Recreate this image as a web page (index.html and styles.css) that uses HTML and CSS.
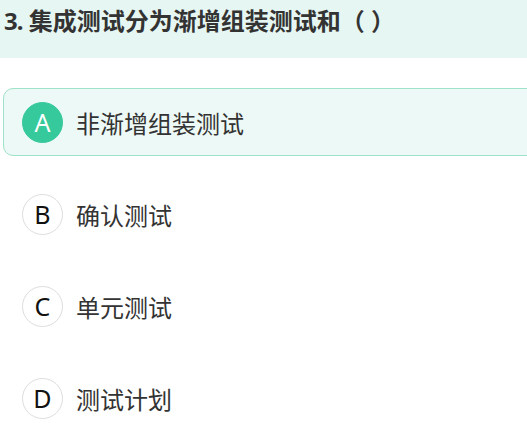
FILE: index.html
```html
<!DOCTYPE html>
<html lang="zh-CN">
<head>
    <meta charset="utf-8">
    <title>单选题</title>
    <link rel="stylesheet" href="styles.css">
</head>
<body>
    <header class="question">
        <h2 class="question-title"><span class="question-no">3.</span> 集成测试分为渐增组装测试和（ ）</h2>
    </header>
    <ul class="options">
        <li class="option selected">
            <span class="option-key">A</span>
            <span class="option-text">非渐增组装测试</span>
        </li>
        <li class="option">
            <span class="option-key">B</span>
            <span class="option-text">确认测试</span>
        </li>
        <li class="option">
            <span class="option-key">C</span>
            <span class="option-text">单元测试</span>
        </li>
        <li class="option">
            <span class="option-key">D</span>
            <span class="option-text">测试计划</span>
        </li>
    </ul>
</body>
</html>
```

FILE: styles.css
```css
* { padding: 0; margin: 0; box-sizing: border-box; }
html { overflow: hidden; }
body {
    font-family: "Noto Sans", "Noto Sans CJK SC", sans-serif;
    color: #333;
    background-color: #fff;
}
.question {
    background-color: #e6f6f2;
    padding: 3px 4px 19px;
}
.question-title {
    font-size: 24px;
    line-height: 36px;
    font-weight: bold;
    color: #333;
}
.question-no { letter-spacing: -1px; }
.options {
    list-style: none;
    margin-top: 30px;
}
.option {
    display: flex;
    align-items: center;
    height: 68px;
    margin: 0 -20px 24px 3px; /* runs past the right edge */
    padding-left: 18px;
    border: 1px solid transparent;
    border-radius: 10px;
}
.option.selected {
    background-color: #edf9f6;
    border-color: #9fe2c9;
}
.option-key {
    width: 41px;
    height: 41px;
    border-radius: 50%;
    border: 1px solid #ddd;
    display: flex;
    align-items: center;
    justify-content: center;
    font-size: 25px;
    color: #111;
    flex-shrink: 0;
}
.selected .option-key {
    background-color: #35c99b;
    border-color: #35c99b;
    color: #fff;
}
.option-text {
    margin-left: 13px;
    font-size: 24px;
    color: #333;
}
```
